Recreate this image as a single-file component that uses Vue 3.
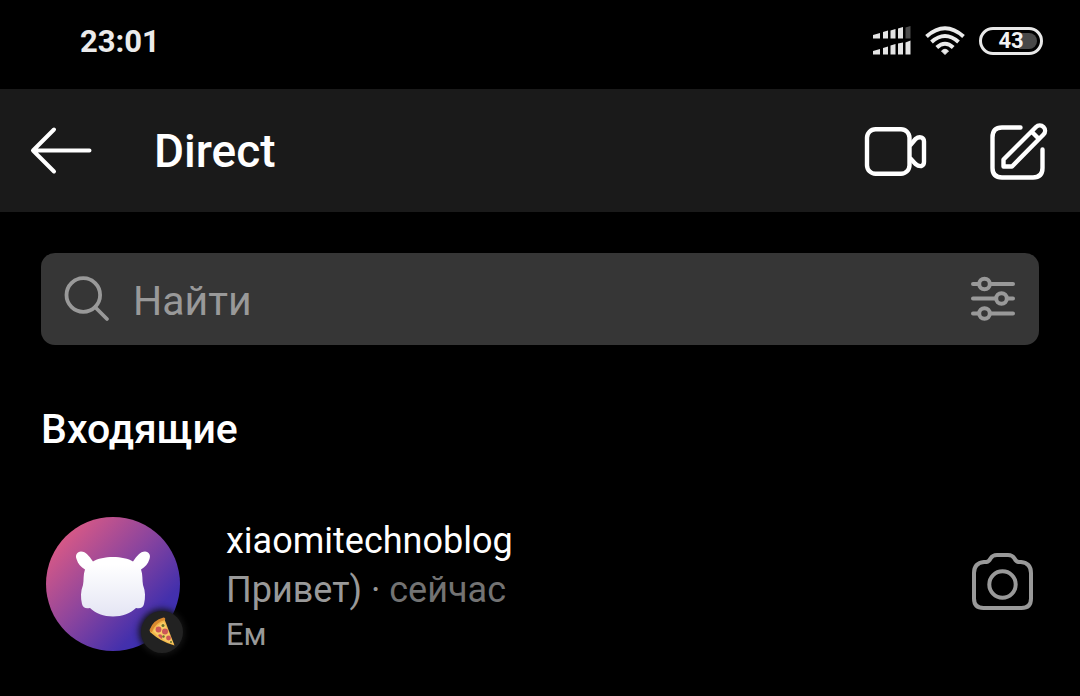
<script setup>
import { ref } from 'vue'

const query = ref('')
const chats = [
  { name: 'xiaomitechnoblog', message: 'Привет)', time: 'сейчас', status: 'Ем' },
]
</script>

<template>
  <div class="screen">
    <div class="status-bar">
      <time class="clock">23:01</time>
      <div class="indicators">
        <svg class="signal" viewBox="0 0 40 30" width="40" height="30" aria-hidden="true">
          <g fill="#e4e4e4">
            <path d="M0 9 7 7V12.500H0ZM10 6 15 4.500V12.500H10ZM17.500 4.500 22.500 3V12.500H17.500ZM25 2.500 30 1V12.500H25Z" />
            <path d="M0 25 7 23V28.500H0ZM10 22 15 20.500V28.500H10ZM17.500 19.500 22.500 18V28.500H17.500ZM25 17.500 30 16.500V28.500H25ZM32.500 16.500 37.500 14.500V28.500H32.500Z" />
          </g>
          <path d="M32.500 1.500 37.500 0V12.500H32.500Z" fill="#4c4c4c" />
        </svg>
        <svg class="wifi" viewBox="0 0 40 30" width="40" height="30" aria-hidden="true">
          <g fill="none" stroke="#ebebeb" stroke-width="4">
            <path d="M1.500 10.500Q20 -6 38.500 10.500" />
            <path d="M6.500 16Q20 4 33.500 16" />
            <path d="M11.800 21.500Q20 14 28.200 21.500" />
          </g>
          <path d="M16.500 25Q20 21.500 23.500 25L20 28.500Z" fill="#ebebeb" stroke="#ebebeb" stroke-width="1" />
        </svg>
        <div class="battery"><span>43</span></div>
      </div>
    </div>

    <header class="toolbar">
      <button class="icon-button" aria-label="Назад">
        <svg viewBox="0 0 64 64" width="64" height="64">
          <path d="M25 10.500 4 31.500 25 52.500M4.500 31.500H60.500" fill="none" stroke="#fff" stroke-width="4" stroke-linecap="round" stroke-linejoin="round" />
        </svg>
      </button>
      <h1>Direct</h1>
      <button class="icon-button" aria-label="Видеочат">
        <svg viewBox="0 0 64 64" width="64" height="64">
          <g fill="none" stroke="#fff" stroke-width="4.4" stroke-linejoin="round">
            <rect x="4" y="10.300" width="42.500" height="44.500" rx="8.500" />
            <path d="M47 26.500 52.500 20Q55.500 17.500 58.500 18.500Q61 19.500 61 22.500V43Q61 46 58.500 47Q55.500 47.500 52.500 45L47 39" />
          </g>
        </svg>
      </button>
      <button class="icon-button" aria-label="Новое сообщение">
        <svg viewBox="0 0 64 68" width="64" height="68">
          <g fill="none" stroke="#fff" stroke-width="4.4" stroke-linecap="round" stroke-linejoin="round">
            <path d="M35.500 10.500H17Q7.500 10.500 7.500 20.500V51Q7.500 60.500 17 60.500H48Q57.500 60.500 57.500 51V32.500" />
            <path d="M18.500 42.500 51 10A5.300 5.300 0 0 1 58.500 17.500L27 49.500H18.500ZM46.500 14.500 54 22" />
          </g>
        </svg>
      </button>
    </header>

    <main>
      <form class="search" role="search" @submit.prevent>
        <svg viewBox="0 0 46 46" width="46" height="46" aria-hidden="true">
          <g fill="none" stroke="#999" stroke-width="3.8" stroke-linecap="round">
            <circle cx="19.300" cy="19" r="16.800" />
            <path d="M31.500 31.500 43 43" />
          </g>
        </svg>
        <input v-model="query" type="text" placeholder="Найти" aria-label="Найти" />
        <button type="button" class="icon-button" aria-label="Фильтры">
          <svg viewBox="0 0 46 46" width="46" height="46">
            <g fill="none" stroke="#999" stroke-width="4" stroke-linecap="round">
              <path d="M3 8H8M21 8H43M3 22.500H25M38 22.500H43M3 37.500H8M21 37.500H43" />
              <circle cx="14.500" cy="8" r="5.300" />
              <circle cx="31.500" cy="22.500" r="5.300" />
              <circle cx="14.500" cy="37.500" r="5.300" />
            </g>
          </svg>
        </button>
      </form>

      <h2>Входящие</h2>

      <ul class="chats">
        <li v-for="chat in chats" :key="chat.name" class="chat">
          <div class="avatar">
            <svg viewBox="0 0 134 134" width="134" height="134" aria-hidden="true">
              <defs>
                <linearGradient id="avatar-bg" x1="0.08" y1="0.15" x2="0.82" y2="0.85">
                  <stop offset="0" stop-color="#dc5a85" />
                  <stop offset="0.5" stop-color="#8a449e" />
                  <stop offset="0.9" stop-color="#4430ac" />
                  <stop offset="1" stop-color="#3d30b0" />
                </linearGradient>
                <linearGradient id="avatar-face" x1="0" y1="0" x2="0" y2="1">
                  <stop offset="0.2" stop-color="#fff" />
                  <stop offset="1" stop-color="#e4e5f4" />
                </linearGradient>
              </defs>
              <circle cx="67" cy="67" r="67" fill="url(#avatar-bg)" />
              <path
                d="M47 44.500C43 39 40 34.500 35 34.500C31 35 29 38 30.500 42C32 47 35 50 39 52.500C37 58 38 63 37 68C34.500 74 34.500 81 36 87C37 91 40 92 44 91C49 96 58 99.500 67 99.500C76 99.500 85 96 90 91C94 92 97 91 98 87C99.500 81 99.500 74 97 68C96 63 97 58 95 52.500C99 50 102 47 103.500 42C105 38 103 35 99 34.500C94 34.500 91 39 87 44.500C78 38.500 56 38.500 47 44.500Z"
                fill="url(#avatar-face)"
              />
            </svg>
            <span class="mood">
              <svg viewBox="0 0 30 32" width="30" height="32" aria-hidden="true">
                <path d="M3 14Q7 5 17 2L27.500 29.500Q14 26 3 16Z" fill="#f3b84b" />
                <path d="M6 15Q11 8 17 6L26.500 28Q15 25 6 15Z" fill="#f9cc68" />
                <path d="M2.500 14Q6 4 16.500 1.500Q19 2 18 4Q9 6 5 16Q2.500 16.500 2.500 14Z" fill="#d9892f" />
                <g fill="#cc5758">
                  <circle cx="11.500" cy="13.500" r="2.900" />
                  <circle cx="18" cy="15.500" r="3" />
                  <circle cx="21.500" cy="22" r="2.400" />
                  <path d="M11 19Q14 17 15.500 20.500L15 23Q12 21.500 11 19Z" />
                </g>
                <g fill="#65702b">
                  <circle cx="16" cy="9.500" r="1.500" />
                  <circle cx="16.500" cy="20.500" r="1.200" />
                  <circle cx="24" cy="26" r="1" />
                </g>
              </svg>
            </span>
          </div>
          <div class="details">
            <p class="name">{{ chat.name }}</p>
            <p class="message">{{ chat.message }} · <span>{{ chat.time }}</span></p>
            <p class="note">{{ chat.status }}</p>
          </div>
          <button class="icon-button camera" aria-label="Камера">
            <svg viewBox="0 0 64 60" width="64" height="60">
              <g fill="none" stroke="#999" stroke-width="4" stroke-linejoin="round">
                <path d="M16.500 11Q19 10.500 20.500 7.500Q22.500 4 27 4H38Q42.500 4 44.500 7.500Q46 10.500 48.500 11H51Q61 12 61 22V47.500Q61 57 51.500 57H13.500Q4 57 4 47.500V22Q4 12 14 11Z" />
                <circle cx="32.500" cy="33.500" r="13.200" />
              </g>
            </svg>
          </button>
        </li>
      </ul>
    </main>
  </div>
</template>

<style>
body {
  background: #000;
}
</style>

<style scoped>
.screen {
  min-height: 100vh;
  box-sizing: border-box;
  background: #000;
  color: #fff;
  font-family: Roboto, "Noto Sans", sans-serif;
}

.status-bar {
  display: flex;
  align-items: center;
  justify-content: space-between;
  height: 89px;
  padding: 0 37px 7px 80px;
  box-sizing: border-box;
}

.clock {
  color: #ebebeb;
  font-size: 31px;
  font-weight: 700;
}

.indicators {
  display: flex;
  align-items: center;
  gap: 14px;
}

.signal {
  margin-right: -2px;
}

.battery {
  display: flex;
  align-items: center;
  justify-content: center;
  width: 64px;
  height: 28px;
  padding: 3px;
  box-sizing: border-box;
  border: 3px solid #e8e8e8;
  border-radius: 14px;
  background: linear-gradient(90deg, #000 66%, #484848 66%) content-box;
  color: #f2f2f2;
  font-size: 22px;
  font-weight: 700;
  line-height: 16px;
}

.icon-button {
  display: flex;
  flex: none;
  padding: 0;
  border: 0;
  background: none;
  cursor: pointer;
}

.toolbar {
  display: flex;
  align-items: center;
  height: 123px;
  padding: 0 31px 0 29px;
  box-sizing: border-box;
  background: #1a1a1a;
}

.toolbar h1 {
  flex: 1;
  margin: 0 0 0 61px;
  font-size: 46px;
  font-weight: 500;
  line-height: 56px;
}

.toolbar .icon-button + .icon-button {
  margin-left: 58px;
}

main {
  padding: 41px;
}

.search {
  display: flex;
  align-items: center;
  height: 92px;
  padding: 0 23px;
  box-sizing: border-box;
  border-radius: 14px;
  background: #363636;
}

.search input {
  flex: 1;
  min-width: 0;
  margin-left: 23px;
  padding: 4px 0 0;
  border: 0;
  outline: 0;
  background: none;
  color: #fff;
  font: 400 41px/48px Roboto, "Noto Sans", sans-serif;
}

.search input::placeholder {
  color: #999;
  opacity: 1;
}

h2 {
  margin: 60px 0 0;
  font-size: 41px;
  font-weight: 500;
  line-height: 48px;
}

.chats {
  margin: 64px 0 0;
  padding: 0;
  list-style: none;
}

.chat {
  display: flex;
  align-items: center;
  padding: 0 5px;
}

.avatar {
  position: relative;
  display: flex;
  flex: none;
  align-self: flex-start;
}

.mood {
  position: absolute;
  right: -3px;
  bottom: -2px;
  display: flex;
  align-items: center;
  justify-content: center;
  width: 42px;
  height: 42px;
  border-radius: 50%;
  background: #222;
  box-shadow: 0 0 6px 2px #141414;
}

.details {
  flex: 1;
  min-width: 0;
  margin-left: 46px;
}

.details p {
  margin: 0;
}

.name,
.message {
  font-size: 36px;
  line-height: 48px;
}

.message {
  color: #999;
  line-height: 50px;
}

.message span {
  color: #737373;
}

.note {
  color: #999;
  font-size: 31px;
  line-height: 40px;
}

.camera {
  margin-bottom: 10px;
}
</style>
